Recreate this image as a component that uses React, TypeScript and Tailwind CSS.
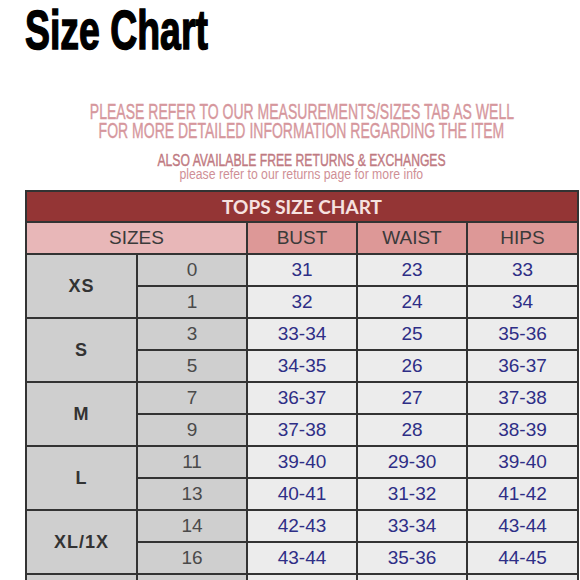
const rows = [
  { size: "XS", subs: [
    { n: "0", bust: "31", waist: "23", hips: "33" },
    { n: "1", bust: "32", waist: "24", hips: "34" },
  ] },
  { size: "S", subs: [
    { n: "3", bust: "33-34", waist: "25", hips: "35-36" },
    { n: "5", bust: "34-35", waist: "26", hips: "36-37" },
  ] },
  { size: "M", subs: [
    { n: "7", bust: "36-37", waist: "27", hips: "37-38" },
    { n: "9", bust: "37-38", waist: "28", hips: "38-39" },
  ] },
  { size: "L", subs: [
    { n: "11", bust: "39-40", waist: "29-30", hips: "39-40" },
    { n: "13", bust: "40-41", waist: "31-32", hips: "41-42" },
  ] },
  { size: "XL/1X", subs: [
    { n: "14", bust: "42-43", waist: "33-34", hips: "43-44" },
    { n: "16", bust: "43-44", waist: "35-36", hips: "44-45" },
  ] },
  { size: "2X", subs: [
    { n: "18", bust: "45-46", waist: "37-38", hips: "46-47" },
    { n: "20", bust: "47-48", waist: "39-40", hips: "48-49" },
  ] },
];

const cell = "border-2 border-[#333] text-center p-0";

const App = () => {
  return (
    <div className="w-[580px] h-[580px] overflow-hidden bg-white font-['Liberation_Sans',Arial,sans-serif]">
      {/* heading */}
      <div className="pl-[25px] pt-[3px] h-[58px]">
        <span className="inline-block origin-left scale-x-[0.68] text-[55px] leading-[55px] font-bold text-black whitespace-nowrap [-webkit-text-stroke:1.5px_#000]">
          Size Chart
        </span>
      </div>

      <div className="ml-[25px] w-[553px]">
        {/* notes */}
        <div className="mt-[44px] whitespace-nowrap">
          <div className="h-[19px] flex justify-center">
            <span className="shrink-0 inline-block scale-x-[0.637] text-[22px] leading-[19px] text-[#d6979d] [-webkit-text-stroke:0.4px_#d6979d]">
              PLEASE REFER TO OUR MEASUREMENTS/SIZES TAB AS WELL
            </span>
          </div>
          <div className="h-[19px] flex justify-center">
            <span className="shrink-0 inline-block scale-x-[0.637] text-[22px] leading-[19px] text-[#d6979d] [-webkit-text-stroke:0.4px_#d6979d]">
              FOR MORE DETAILED INFORMATION REGARDING THE ITEM
            </span>
          </div>
          <div className="h-[14px] mt-[13px] flex justify-center">
            <span className="shrink-0 inline-block scale-x-[0.76] text-[16px] leading-[16px] text-[#bf7a82] [-webkit-text-stroke:0.4px_#bf7a82]">
              ALSO AVAILABLE FREE RETURNS &amp; EXCHANGES
            </span>
          </div>
          <div className="h-[14px] flex justify-center">
            <span className="shrink-0 inline-block scale-x-[0.875] text-[14px] leading-[14px] text-[#cf8f96]">
              please refer to our returns page for more info
            </span>
          </div>
        </div>

        {/* table */}
        <table className="mt-[9px] w-[552px] table-fixed border-collapse">
          <colgroup>
            <col className="w-[111px]" />
            <col className="w-[110px]" />
            <col className="w-[110px]" />
            <col className="w-[110px]" />
            <col className="w-[111px]" />
          </colgroup>
          <thead>
            <tr className="h-[31px]">
              <th colSpan={5} className={`${cell} bg-[#943535] text-[#f6e2e0] font-['Lato',sans-serif] font-bold text-[19px] leading-none`}>
                TOPS SIZE CHART
              </th>
            </tr>
            <tr className="h-[32px] text-[19px] font-normal text-[#3a3a3a]">
              <th colSpan={2} className={`${cell} bg-[#e8b7b8] font-normal`}>SIZES</th>
              <th className={`${cell} bg-[#dd9897] font-normal`}>BUST</th>
              <th className={`${cell} bg-[#dd9897] font-normal`}>WAIST</th>
              <th className={`${cell} bg-[#dd9897] font-normal`}>HIPS</th>
            </tr>
          </thead>
          <tbody>
            {rows.map((r) =>
              r.subs.map((s, i) => (
                <tr key={r.size + s.n} className="h-[32px] text-[19px]">
                  {i === 0 && (
                    <td rowSpan={2} className={`${cell} bg-[#cfcfcf] text-[18px] font-bold tracking-[1px] text-[#333]`}>
                      {r.size}
                    </td>
                  )}
                  <td className={`${cell} bg-[#cfcfcf] text-[#4a4a4a]`}>{s.n}</td>
                  <td className={`${cell} bg-[#ececec] text-[#2e2e86]`}>{s.bust}</td>
                  <td className={`${cell} bg-[#ececec] text-[#2e2e86]`}>{s.waist}</td>
                  <td className={`${cell} bg-[#ececec] text-[#2e2e86]`}>{s.hips}</td>
                </tr>
              ))
            )}
          </tbody>
        </table>
      </div>
    </div>
  );
};

export default App;
